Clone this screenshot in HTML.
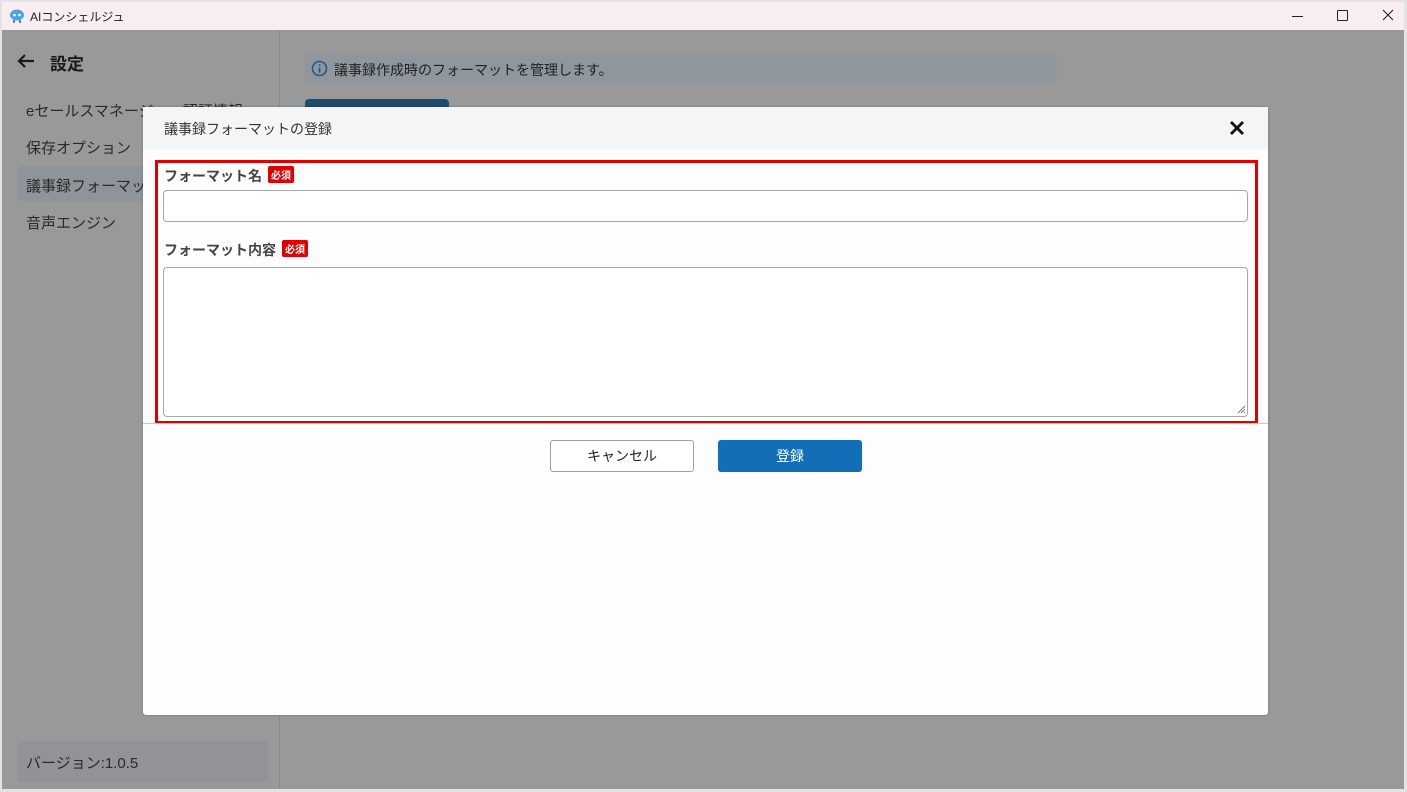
<!DOCTYPE html>
<html><head><meta charset="utf-8"><style>
*{box-sizing:border-box;margin:0;padding:0}
body{width:1407px;height:792px;overflow:hidden;background:#e3e3e6;font-family:"Liberation Sans","Noto Sans CJK JP",sans-serif;position:relative;color:#222}
.abs{position:absolute}
.title{left:2px;top:2px;width:1402px;height:28px;background:#f8eef0;font-size:12px}
.main{left:2px;top:30px;width:1402px;height:759px;background:#999}
.side{left:0;top:0;width:278px;height:759px;border-right:1px solid #8a8a8a}
.item{left:24px;font-size:15px;color:#2a2a2a}
.modal{left:143px;top:107px;width:1125px;height:608px;background:#fdfdfd;border-radius:3px;box-shadow:0 0 2px rgba(0,0,0,.3)}
.mh{left:0;top:0;width:1125px;height:42px;background:#f4f5f7;font-size:14px;padding:12px 0 0 21px;color:#333}
.red{left:12px;top:53px;width:1103px;height:264px;border:3px solid #e00000}
.lbl{font-size:14px;font-weight:bold;color:#444}
.req{display:inline-block;background:#e00000;color:#fff;font-size:10px;padding:1px 3px;margin-left:6px;vertical-align:2px;border-radius:2px}
.inp{background:#fff;border:1px solid #a0a8b4;border-radius:4px}
.btn{top:333px;width:144px;height:32px;border-radius:3px;font-size:14px;text-align:center;line-height:30px}
</style></head><body>
<div class="abs title">
<svg class="abs" style="left:7px;top:6px" width="16" height="15" viewBox="0 0 16 15"><ellipse cx="8" cy="7" rx="7" ry="5.5" fill="#4aa6e0"/><circle cx="5.5" cy="7" r="1.3" fill="#fff"/><circle cx="10.5" cy="7" r="1.3" fill="#fff"/><rect x="4" y="12" width="2" height="3" fill="#3a8cc8"/><rect x="10" y="12" width="2" height="3" fill="#3a8cc8"/></svg>
<span class="abs" style="left:28px;top:6px">AIコンシェルジュ</span>
<div class="abs" style="left:1290px;top:14px;width:11px;height:1px;background:#222"></div>
<div class="abs" style="left:1335px;top:8px;width:11px;height:11px;border:1px solid #222;border-radius:1px"></div>
<svg class="abs" style="left:1380px;top:7px" width="12" height="12"><path d="M1 1L11 11M11 1L1 11" stroke="#222" stroke-width="1.1"/></svg>
</div>
<div class="abs main">
<div class="abs side">
<svg class="abs" style="left:15px;top:23px" width="18" height="16"><path d="M17 8H2M8 2L2 8L8 14" stroke="#1a1a1a" stroke-width="2.2" fill="none"/></svg>
<div class="abs" style="left:48px;top:20px;font-size:17px;font-weight:bold;color:#1a1a1a">設定</div>
<div class="abs item" style="top:70px">eセールスマネージャー認証情報</div>
<div class="abs item" style="top:107px">保存オプション</div>
<div class="abs" style="left:16px;top:136px;width:150px;height:35px;background:#8f949a;border-radius:4px"></div>
<div class="abs item" style="top:145px">議事録フォーマット</div>
<div class="abs item" style="top:182px">音声エンジン</div>
<div class="abs" style="left:16px;top:711px;width:250px;height:41px;background:#919396"></div>
<div class="abs item" style="top:722px">バージョン:1.0.5</div>
</div>
<div class="abs" style="left:303px;top:24px;width:752px;height:29px;background:#8f969e;border-radius:3px"></div>
<svg class="abs" style="left:309px;top:30px" width="17" height="17"><circle cx="8.5" cy="8.5" r="7" stroke="#1d5c8e" stroke-width="1.6" fill="none"/><rect x="7.7" y="7.5" width="1.7" height="5" fill="#1d5c8e"/><rect x="7.7" y="4.3" width="1.7" height="1.7" fill="#1d5c8e"/></svg>
<div class="abs" style="left:332px;top:30px;font-size:14px;color:#222">議事録作成時のフォーマットを管理します。</div>
<div class="abs" style="left:303px;top:69px;width:144px;height:20px;background:#1b4d73;border-radius:4px 4px 0 0"></div>
</div>
<div class="abs modal">
<div class="abs mh">議事録フォーマットの登録</div>
<svg class="abs" style="left:1086px;top:13px" width="16" height="16"><path d="M2 2L14 14M14 2L2 14" stroke="#111" stroke-width="2.8"/></svg>
<div class="abs red"></div>
<div class="abs lbl" style="left:21px;top:59px">フォーマット名<span class="req">必須</span></div>
<div class="abs inp" style="left:20px;top:83px;width:1085px;height:32px"></div>
<div class="abs lbl" style="left:21px;top:133px">フォーマット内容<span class="req">必須</span></div>
<div class="abs inp" style="left:20px;top:160px;width:1085px;height:150px"></div>
<svg class="abs" style="left:1094px;top:298px" width="9" height="9"><path d="M1 8L8 1M4 8L8 4M7 8L8 7" stroke="#777" stroke-width="1"/></svg>
<div class="abs" style="left:0;top:316px;width:1125px;height:1px;background:#c8ccd2"></div>
<div class="abs btn" style="left:407px;border:1px solid #98a2ae;background:#fff;color:#222">キャンセル</div>
<div class="abs btn" style="left:575px;background:#126eb6;color:#fff;line-height:32px">登録</div>
</div>
</body></html>
